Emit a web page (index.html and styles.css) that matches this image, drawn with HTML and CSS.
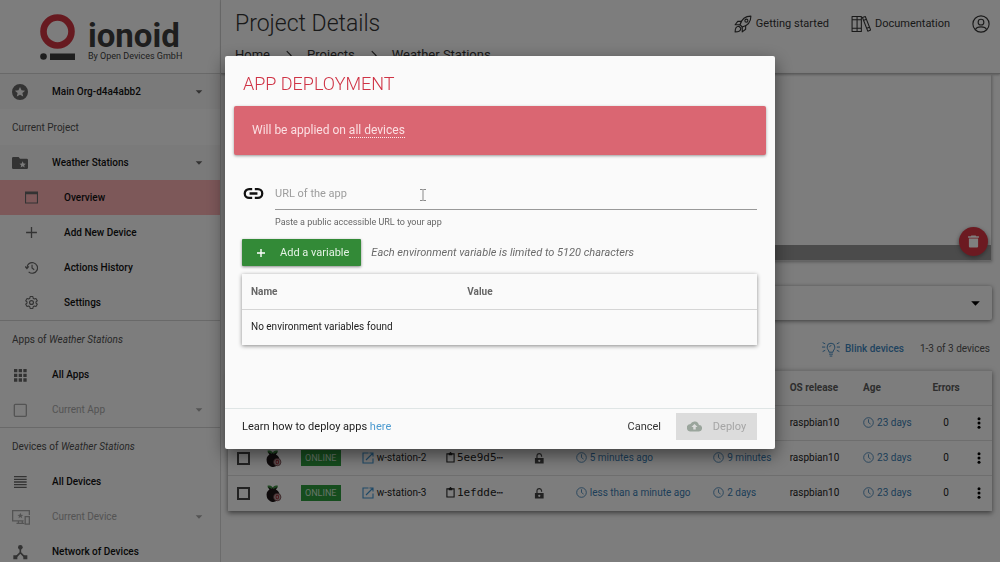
FILE: index.html
```html
<!DOCTYPE html>
<html lang="en">
<head>
<meta charset="utf-8">
<title>Project Details</title>
<link rel="stylesheet" href="styles.css">
</head>
<body>
<svg class="defs" aria-hidden="true">
  <symbol id="clock" viewBox="0 0 24 24"><g fill="none" stroke="currentColor" stroke-width="1.8"><circle cx="12" cy="12" r="10.5"/><path d="M12 5v7l4.5 3.5"/></g></symbol>
  <symbol id="caret" viewBox="0 0 24 24"><path fill="currentColor" d="M4 8h16l-8 8z"/></symbol>
  <symbol id="dots" viewBox="0 0 24 24"><g fill="currentColor"><circle cx="12" cy="3.5" r="3"/><circle cx="12" cy="12" r="3"/><circle cx="12" cy="20.5" r="3"/></g></symbol>
  <symbol id="open" viewBox="0 0 24 24"><path fill="none" stroke="currentColor" stroke-width="2.2" d="M13 2H2v20h20V13M15 2h7v7M22 2L8 16"/></symbol>
  <symbol id="clip" viewBox="0 0 20 24"><path fill="none" stroke="currentColor" stroke-width="2.4" d="M2 4h16v18H2z"/><path fill="currentColor" d="M6 2h2a2 2 0 0 1 4 0h2v5H6z"/></symbol>
  <symbol id="lock" viewBox="0 0 24 24"><path fill="none" stroke="currentColor" stroke-width="2.6" d="M6.500 12V7a5 5 0 0 1 10-1v2"/><path fill="currentColor" fill-rule="evenodd" d="M2 11h19v12H2zM11.500 14.500a2.300 2.300 0 1 0 0 5 2.300 2.300 0 0 0 0-5z"/></symbol>
  <symbol id="berry" viewBox="0 0 24 26"><path fill="#3f8f45" d="M2 1c5-1 7 0 8 4 1-4 4-5 8-4 0 4-3 6-8 6S2 5 2 1z"/><path fill="#1d1517" d="M3 3l6 3 1-3 1 3 6-3-2 4c5 3 6 7 5 11s-5 8-9 8-9-3-10-8 0-8 4-11z"/><circle cx="17" cy="18.500" r="5.600" fill="#b5a5a5" stroke="#6b3a3e" stroke-width="1.200"/><path fill="none" stroke="#9c2f39" stroke-width="1.600" d="M17 15.500c-2.600 0-2.600 6 0 6s2.600-6 0-6z"/></symbol>
</svg>

<div class="app">
  <aside class="sidebar">
    <div class="logo">
      <svg class="logo-mark" viewBox="0 0 35 47" aria-hidden="true"><circle cx="17.500" cy="17.500" r="14" fill="none" stroke="#cf3540" stroke-width="6.600"/><circle cx="3.500" cy="42.500" r="3.300" fill="#3d3d3d"/><rect x="10" y="39.500" width="25" height="6.500" fill="#3d3d3d"/></svg>
      <div class="logo-words"><span class="logo-name">ionoid</span><span class="logo-by">By Open Devices GmbH</span></div>
    </div>
    <nav class="nav">
      <section class="group">
        <a class="item tinted" href="#"><svg class="icon" viewBox="0 0 24 24"><path fill="currentColor" fill-rule="evenodd" d="M12 0a12 12 0 1 0 0 24 12 12 0 0 0 0-24zM12 4.500l2.300 5 5.400.5-4.100 3.600 1.200 5.300-4.800-2.800-4.800 2.800 1.200-5.300L4.300 10l5.400-.5z"/></svg><span class="label">Main Org-d4a4abb2</span><svg class="arrow"><use href="#caret"/></svg></a>
        <h2 class="heading">Current Project</h2>
        <a class="item tinted" href="#"><svg class="icon" viewBox="0 0 24 24"><path fill="currentColor" fill-rule="evenodd" d="M2 3h8l2 2.500h10a2 2 0 0 1 2 2V19a2 2 0 0 1-2 2H2a2 2 0 0 1-2-2V5a2 2 0 0 1 2-2zM16 9.500l-1.400 3.200-3.400.3 2.600 2.300-.8 3.400 3-1.800 3 1.800-.8-3.400 2.600-2.300-3.400-.3z"/></svg><span class="label">Weather Stations</span><svg class="arrow"><use href="#caret"/></svg></a>
        <a class="item sub active" href="#"><svg class="icon" viewBox="0 0 24 24"><path fill="none" stroke="currentColor" stroke-width="2" d="M1 2h22v20H1z"/><path fill="currentColor" d="M1 2h22v4H1z"/></svg><span class="label">Overview</span></a>
        <a class="item sub" href="#"><svg class="icon" viewBox="0 0 24 24"><path fill="none" stroke="currentColor" stroke-width="2.400" d="M12 2v20M2 12h20"/></svg><span class="label">Add New Device</span></a>
        <a class="item sub" href="#"><svg class="icon" viewBox="0 0 24 24"><path fill="none" stroke="currentColor" stroke-width="2.200" d="M3.500 13a9.800 9.800 0 1 1 3.200 7M0 10l3.500 4L7 10M13 7v6l4 3"/></svg><span class="label">Actions History</span></a>
        <a class="item sub" href="#"><svg class="icon" viewBox="0 0 24 24"><path fill="none" stroke="currentColor" stroke-width="2" stroke-linejoin="round" d="M9.500 1h5l.7 3.300 2 1.200 3-1 2.500 4.300-2.400 2.200v2l2.400 2.200-2.500 4.300-3-1-2 1.200-.7 3.300h-5l-.7-3.300-2-1.200-3 1-2.500-4.300L3.700 13v-2L1.300 8.800l2.500-4.300 3 1 2-1.200z"/><circle cx="12" cy="12" r="3.600" fill="none" stroke="currentColor" stroke-width="2.200"/></svg><span class="label">Settings</span></a>
      </section>
      <section class="group">
        <h2 class="heading">Apps of <em>Weather Stations</em></h2>
        <a class="item" href="#"><svg class="icon" viewBox="0 0 24 24"><path fill="currentColor" d="M3 3h5v5H3zM10 3h5v5h-5zM17 3h5v5h-5zM3 10h5v5H3zM10 10h5v5h-5zM17 10h5v5h-5zM3 17h5v5H3zM10 17h5v5h-5zM17 17h5v5h-5z"/></svg><span class="label">All Apps</span></a>
        <a class="item faded" href="#"><svg class="icon" viewBox="0 0 24 24"><rect x="3.500" y="3.500" width="18" height="18" rx="1.500" fill="none" stroke="currentColor" stroke-width="2"/></svg><span class="label">Current App</span><svg class="arrow"><use href="#caret"/></svg></a>
      </section>
      <section class="group">
        <h2 class="heading">Devices of <em>Weather Stations</em></h2>
        <a class="item" href="#"><svg class="icon" viewBox="0 0 24 24"><path fill="none" stroke="currentColor" stroke-width="2" d="M3 4h19M3 8h19M3 12h19M3 16h19M3 20h19"/></svg><span class="label">All Devices</span></a>
        <a class="item faded" href="#"><svg class="icon wide" viewBox="0 0 28 24"><path fill="none" stroke="currentColor" stroke-width="2" d="M27 9V2H1v16h17M10 18v4M16 18v4M7 22h12M20.500 11.500h6.500V23h-6.500z"/><path fill="currentColor" d="M13 5.500l1.300 3 3.200.2-2.500 2 .9 3.100-2.900-1.700-2.900 1.700.9-3.100-2.500-2 3.200-.2z"/></svg><span class="label">Current Device</span><svg class="arrow"><use href="#caret"/></svg></a>
        <a class="item" href="#"><svg class="icon" viewBox="0 0 24 24"><path fill="none" stroke="currentColor" stroke-width="2.400" d="M12.500 5v8l-7 7M12.500 13l7 7"/><circle cx="12.500" cy="5" r="3.500" fill="currentColor"/><path fill="currentColor" d="M2 17h6v6H2zM17 17h6v6h-6z"/></svg><span class="label">Network of Devices</span></a>
      </section>
    </nav>
  </aside>

  <div class="page">
    <header class="topbar">
      <div class="top-row">
        <h1 class="page-title">Project Details</h1>
        <a class="top-link" href="#"><svg class="top-icon" viewBox="0 0 24 24"><g fill="none" stroke="currentColor" stroke-width="1.500" stroke-linejoin="round"><path d="M8 13C10 6 15 1.500 22.500 1.500 22.500 9 18 14 11 16z"/><circle cx="16.500" cy="7.500" r="2"/><path d="M10 8.500H5L1.500 13H8M15.500 14v5L11 22.500V16M6.500 15c-3 0-5 2-5 7.500 5.500 0 7.500-2 7.500-5z"/></g></svg>Getting started</a>
        <a class="top-link" href="#"><svg class="top-icon book" viewBox="0 0 28 24"><path fill="none" stroke="currentColor" stroke-width="1.500" stroke-linejoin="round" d="M1.500 1.500h7v21h-7zM8.500 1.500h6v21h-6zM1.500 6h13M1.500 18h13M16 3l4-1.500 7.500 19-4 1.500zM17.500 7l4-1.500M22 18l4-1.500"/></svg>Documentation</a>
        <a class="account" href="#" aria-label="Account"><svg class="top-icon" viewBox="0 0 24 24"><g fill="none" stroke="currentColor" stroke-width="1.500"><circle cx="12" cy="12" r="10.800"/><circle cx="12" cy="9.500" r="3.800"/><path d="M4.500 19.500c2-5 13-5 15 0"/></g></svg></a>
      </div>
      <nav class="crumbs"><a href="#">Home</a><svg class="chev" viewBox="0 0 8 12"><path fill="none" stroke="currentColor" stroke-width="1.300" d="M2 1l5 5-5 5"/></svg><a href="#">Projects</a><svg class="chev" viewBox="0 0 8 12"><path fill="none" stroke="currentColor" stroke-width="1.300" d="M2 1l5 5-5 5"/></svg><a href="#">Weather Stations</a></nav>
    </header>
    <main class="content">
      <section class="map">
        <div class="map-foot"></div>
        <button class="trash" aria-label="Delete"><svg class="trash-icon" viewBox="0 0 24 24"><path fill="#fff" d="M8 1h8l1 1.500h5V5H2V2.500h5zM3.500 6.500h17V21a2 2 0 0 1-2 2h-13a2 2 0 0 1-2-2z"/></svg></button>
      </section>
      <button class="panel" aria-label="Expand"><svg class="panel-caret"><use href="#caret"/></svg></button>
      <div class="tools">
        <a class="blink" href="#"><svg class="bulb" viewBox="0 0 28 24"><g fill="none" stroke="currentColor" stroke-width="1.500"><path d="M11 17c0-3-3-4-3-8a6 6 0 0 1 12 0c0 4-3 5-3 8zM11 20h6M12 23h4M1 2l4 2M0 9h5M1 16l4-2M27 2l-4 2M28 9h-5M27 16l-4-2M12 9c0-1.500 1-2.500 2.500-2.500"/></g></svg>Blink devices</a>
        <span class="count">1-3 of 3 devices</span>
      </div>
      <table class="devices">
        <colgroup><col class="c-check"><col class="c-berry"><col class="c-state"><col class="c-name"><col class="c-id"><col class="c-lock"><col class="c-seen"><col class="c-up"><col class="c-os"><col class="c-age"><col class="c-err"><col class="c-menu"></colgroup>
        <thead><tr><td colspan="8"></td><th>OS release</th><th class="age">Age</th><th class="mid">Errors</th><td></td></tr></thead>
        <tbody>
          <tr><td colspan="8"></td><td>raspbian10</td><td class="time age"><svg class="mini"><use href="#clock"/></svg>23 days</td><td class="mid">0</td><td><button class="menu" aria-label="Menu"><svg class="mini"><use href="#dots"/></svg></button></td></tr>
          <tr><td><input class="check" type="checkbox" aria-label="Select w-station-2"></td><td class="os"><svg class="berry"><use href="#berry"/></svg></td><td><span class="online">ONLINE</span></td><td><a href="#"><svg class="mini blue"><use href="#open"/></svg>w-station-2</a></td><td class="code"><svg class="mini tight"><use href="#clip"/></svg>5ee9d5⋯</td><td class="key"><svg class="mini lock"><use href="#lock"/></svg></td><td class="time"><svg class="mini"><use href="#clock"/></svg>5 minutes ago</td><td class="time"><svg class="mini"><use href="#clock"/></svg>9 minutes</td><td>raspbian10</td><td class="time age"><svg class="mini"><use href="#clock"/></svg>23 days</td><td class="mid">0</td><td><button class="menu" aria-label="Menu"><svg class="mini"><use href="#dots"/></svg></button></td></tr>
          <tr><td><input class="check" type="checkbox" aria-label="Select w-station-3"></td><td class="os"><svg class="berry"><use href="#berry"/></svg></td><td><span class="online">ONLINE</span></td><td><a href="#"><svg class="mini blue"><use href="#open"/></svg>w-station-3</a></td><td class="code"><svg class="mini tight"><use href="#clip"/></svg>1efdde⋯</td><td class="key"><svg class="mini lock"><use href="#lock"/></svg></td><td class="time"><svg class="mini"><use href="#clock"/></svg>less than a minute ago</td><td class="time"><svg class="mini"><use href="#clock"/></svg>2 days</td><td>raspbian10</td><td class="time age"><svg class="mini"><use href="#clock"/></svg>23 days</td><td class="mid">0</td><td><button class="menu" aria-label="Menu"><svg class="mini"><use href="#dots"/></svg></button></td></tr>
        </tbody>
      </table>
    </main>
  </div>
</div>

<div class="overlay">
  <div class="dialog" role="dialog" aria-labelledby="dialog-title">
    <h2 class="dialog-title" id="dialog-title">APP DEPLOYMENT</h2>
    <p class="banner"><span>Will be applied on <a href="#">all devices</a></span></p>
    <form class="form">
      <div class="url-row">
        <svg class="link-icon" viewBox="0 0 24 14" aria-hidden="true"><path fill="none" stroke="#111" stroke-width="2.600" d="M10.500 2H7a5 5 0 0 0 0 10h3.500M13.500 2H17a5 5 0 0 1 0 10h-3.500M7.500 7h9"/></svg>
        <div class="field">
          <input class="url" id="url" type="text" placeholder="URL of the app">
          <label class="hint" for="url">Paste a public accessible URL to your app</label>
          <svg class="ibeam" viewBox="0 0 8 14" aria-hidden="true"><path fill="none" stroke="#8a8a8a" stroke-width="1" d="M1 1.500h2.500l.5.500.5-.5H7M4 2v10M1 12.500h2.500l.5-.5.5.500H7"/></svg>
        </div>
      </div>
      <div class="add-row">
        <button class="add" type="button"><svg class="plus" viewBox="0 0 10 10"><path fill="none" stroke="#fff" stroke-width="1.400" d="M5 1v8M1 5h8"/></svg>Add a variable</button>
        <em class="note">Each environment variable is limited to 5120 characters</em>
      </div>
      <table class="vars">
        <thead><tr><th class="v-name">Name</th><th>Value</th></tr></thead>
        <tbody><tr><td colspan="2">No environment variables found</td></tr></tbody>
      </table>
    </form>
    <footer class="dialog-foot">
      <span class="learn">Learn how to deploy apps <a href="#">here</a></span>
      <button class="cancel">Cancel</button>
      <button class="deploy" disabled><svg class="cloud" viewBox="0 0 24 18"><path fill="#9aa59c" fill-rule="evenodd" d="M19.300 6.500A7.500 7.500 0 0 0 5.300 4.800 6 6 0 0 0 6 17h13a5.200 5.200 0 0 0 .3-10.500zM14 10v4h-4v-4H7l5-5 5 5z"/></svg>Deploy</button>
    </footer>
  </div>
</div>
</body>
</html>
```
FILE: styles.css
```css
* { box-sizing: border-box; }
body { margin: 0; height: 100vh; overflow: hidden; background: #fafafa; color: #222; font: 11px/16px Roboto, "Liberation Sans", sans-serif; }
a { color: inherit; text-decoration: none; }
button { font: inherit; border: 0; padding: 0; cursor: pointer; }
h1, h2, p { margin: 0; font-weight: 400; }
svg { flex: none; }
.defs { display: none; }

.app { display: flex; height: 100vh; }
.sidebar { width: 221px; flex: none; overflow: hidden; border-right: 1px solid #d6d6d6; font-size: 10px; }
.logo { display: flex; gap: 13px; height: 74px; padding: 14px 0 0 40px; border-bottom: 1px solid #d2d2d2; }
.logo-mark { width: 35px; height: 47px; }
.logo-words { display: flex; flex-direction: column; padding-top: 7px; color: #3d3d3d; }
.logo-name { font-size: 33px; line-height: 30px; font-weight: 700; }
.logo-by { font-size: 9px; line-height: 11px; }
.group { border-bottom: 1px solid #d2d2d2; }
.heading { height: 36px; padding: 1px 0 0 12px; font-size: 10px; line-height: 35px; color: #505050; }
.item { display: flex; align-items: center; height: 35px; padding: 0 16px 0 12px; font-weight: 500; color: #111; }
.item .icon { width: 16px; height: 16px; color: #666; }
.item .icon.wide { width: 18px; margin-right: -2px; }
.label { flex: 1; padding-left: 24px; }
.arrow { width: 10px; height: 10px; color: #666; }
.tinted { background: #f5f4f4; }
.item.sub { padding-left: 25px; }
.item.sub .icon { width: 13px; height: 13px; }
.sub .label { padding-left: 26px; }
.active { background: #fab0b3; }
.item.faded, .faded .icon, .faded .arrow { color: #a8a8a8; font-weight: 400; }

.page { flex: 1; min-width: 0; }
.topbar { height: 74px; padding: 11px 10px 0 14px; border-bottom: 1px solid #bbb; box-shadow: 0 1px 2px #bbb; color: #333; }
.top-row { display: flex; align-items: center; height: 25px; }
.page-title { flex: 1; font-size: 23px; line-height: 25px; font-weight: 300; }
.top-link { display: flex; align-items: center; gap: 4px; margin-right: 22px; }
.top-icon { display: block; width: 18px; height: 18px; }
.book { width: 20px; }
.crumbs { display: flex; align-items: center; gap: 15px; margin-top: 11px; font-size: 13px; }
.chev { width: 7px; height: 11px; }
.content { padding: 0 8px 0 7px; font-size: 10px; }
.map { position: relative; display: flex; align-items: flex-end; height: 187px; border: 1px solid #ccc; border-top: 0; box-shadow: 0 1px 3px #aaa; }
.map-foot { flex: 1; height: 15px; background: #969696; }
.trash { position: absolute; right: 3px; bottom: 4px; display: grid; place-items: center; width: 29px; height: 29px; border-radius: 50%; background: #d83543; box-shadow: 0 2px 4px #666; }
.trash-icon { width: 13px; height: 13px; }
.panel { display: flex; align-items: center; justify-content: flex-end; width: 100%; height: 34px; margin-top: 25px; padding-right: 10px; border-radius: 2px; background: #fafafa; box-shadow: 0 1px 4px #777; color: #000; }
.panel-caret { width: 13px; height: 13px; }
.tools { display: flex; align-items: center; justify-content: flex-end; height: 50px; padding: 8px 2px 0 0; color: #555; }
.blink { display: flex; align-items: center; gap: 5px; margin-right: 16px; font-weight: 500; color: #3f87bf; }
.bulb { width: 18px; height: 16px; }
.devices { width: 100%; table-layout: fixed; border-collapse: collapse; box-shadow: 0 2px 5px #777; }
.devices td, .devices th { height: 35px; padding: 0 0 0 4px; border-top: 1px solid #ddd; text-align: left; white-space: nowrap; }
.devices th { font-weight: 700; color: #5c5c5c; }
.devices .mid { padding: 0; text-align: center; }
.devices .os { padding: 0; }
.devices .age { padding-left: 1px; }
.devices .key { padding-left: 8px; }
.c-check { width: 5%; } .c-berry { width: 4%; } .c-state { width: 8%; } .c-name { width: 11%; } .c-id { width: 11%; } .c-lock { width: 6%; }
.c-seen { width: 18%; } .c-up { width: 10%; } .c-os { width: 10%; } .c-age { width: 8%; } .c-err { width: 6%; } .c-menu { width: 3%; }
.mini { width: 11px; height: 11px; margin-right: 3px; vertical-align: -2px; }
.mini.tight { width: 9px; margin-right: 2px; }
.mini.lock { display: block; margin: 0; color: #444; }
.mini.blue { width: 12px; height: 12px; vertical-align: -3px; color: #3f93cf; }
.time { color: #3a7db2; }
.menu { display: block; background: none; color: #000; }
.menu .mini { display: block; width: 12px; height: 12px; margin: 0; }
.check { appearance: none; display: block; width: 13px; height: 13px; margin: 0 0 0 5px; border: 2px solid #444; }
.berry { display: block; width: 16px; height: 17px; }
.online { display: block; width: 40px; height: 16px; background: #2c9a3c; color: #cfe8d2; font-size: 9px; line-height: 16px; text-align: center; }
.devices .code { font-family: "DejaVu Sans Mono", monospace; font-size: 11px; }

.overlay { position: fixed; inset: 0; padding: 56px 16px 0; background: rgba(0, 0, 0, 0.5); }
.dialog { display: flex; flex-direction: column; max-width: 550px; margin: 0 auto; background: #fafafa; border-radius: 2px; box-shadow: 0 6px 18px rgba(0, 0, 0, 0.5); }
.dialog-title { padding: 15px 18px 9px; font-size: 18px; line-height: 26px; font-weight: 300; color: #cf3345; }
.banner { margin: 0 9px; padding: 16px 18px; border-radius: 2px; background: #da6672; box-shadow: 0 1px 3px #999; color: #fbdfe2; font-size: 12px; line-height: 17px; }
.banner a { border-bottom: 1px dotted #fbe9eb; }
.form { padding: 30px 18px 63px 17px; }
.url-row { display: flex; align-items: flex-start; gap: 11px; padding-left: 1px; }
.link-icon { width: 21px; height: 13px; margin-top: 2px; }
.field { position: relative; display: flex; flex: 1; flex-direction: column; }
.url { height: 25px; padding: 0 0 8px; border: 0; border-bottom: 1px solid #999; background: none; outline: 0; font: 11px/16px Roboto, "Liberation Sans", sans-serif; }
.url::placeholder { color: #9c9c9c; }
.hint { padding-top: 6px; font-size: 9px; line-height: 12px; color: #666; }
.ibeam { position: absolute; left: 144px; top: 3px; width: 8px; height: 14px; }
.add-row { display: flex; align-items: center; gap: 10px; margin-top: 11px; }
.add { display: flex; align-items: center; justify-content: center; gap: 14px; height: 27px; padding: 0 12px 0 14px; background: #338a37; border-radius: 1px; box-shadow: 0 1px 3px #888; color: #e4f3e5; }
.plus { width: 10px; height: 10px; }
.note { color: #6a6a6a; }
.vars { width: 100%; margin-top: 8px; border-collapse: collapse; box-shadow: 0 1px 4px #888; font-size: 10px; }
.vars th, .vars td { height: 36px; padding: 0 9px; text-align: left; }
.vars th { height: 35px; padding-top: 2px; font-weight: 700; color: #666; border-bottom: 1px solid #d5d5d5; }
.vars .v-name { width: 42%; }
.dialog-foot { display: flex; align-items: center; padding: 4px 18px 9px 17px; border-top: 1px solid #dfe5e5; }
.learn { flex: 1; }
.learn a { color: #4d9bd0; }
.cancel { background: none; color: #333; margin-right: 15px; }
.deploy { display: flex; align-items: center; justify-content: center; gap: 11px; width: 81px; height: 27px; background: #dcdcdc; color: #a5a5a5; }
.cloud { width: 15px; height: 11px; }
```
